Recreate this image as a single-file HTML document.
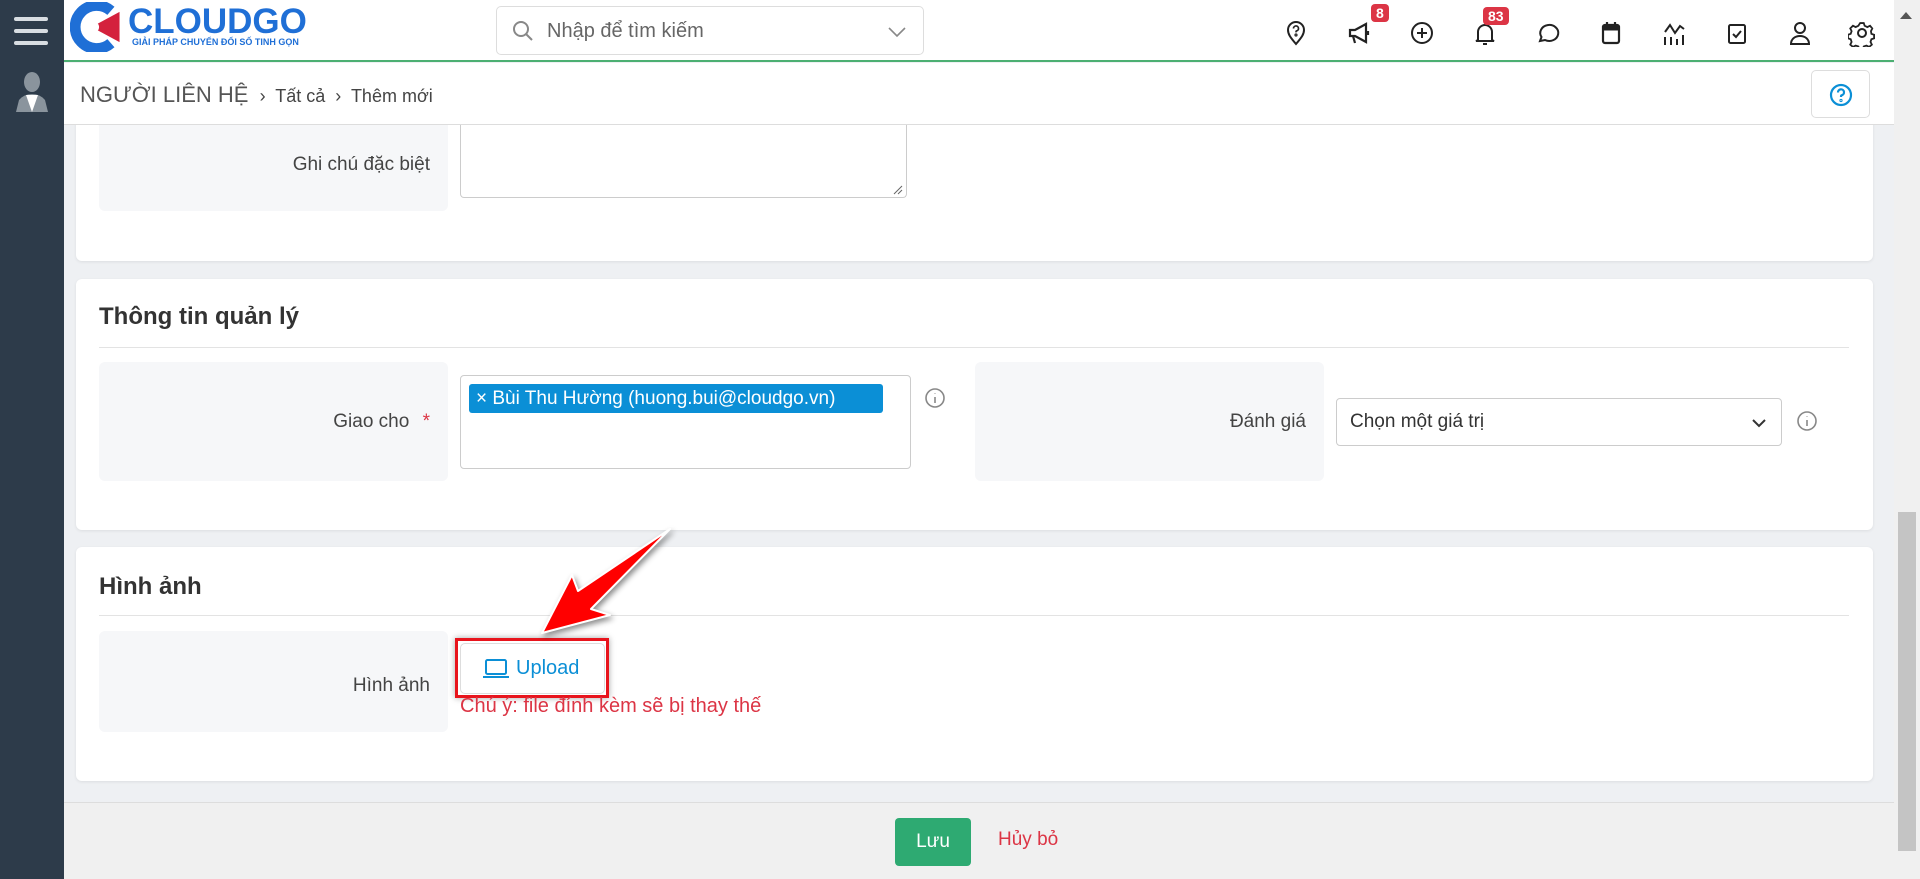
<!DOCTYPE html>
<html><head><meta charset="utf-8"><style>
*{box-sizing:border-box;margin:0;padding:0}
body{width:1920px;height:879px;overflow:hidden;background:#eef0f3;font-family:"Liberation Sans","Noto Sans CJK SC",sans-serif;color:#333;position:relative}
.abs{position:absolute}
.side{left:0;top:0;width:64px;height:879px;background:#2d3b4a}
.top{left:64px;top:0;width:1830px;height:62px;background:#fff;border-bottom:2px solid #4caf72}
.bc{left:64px;top:63px;width:1830px;height:62px;background:#fff;border-bottom:1px solid #ddd}
.card{background:#fff;border-radius:6px;box-shadow:0 1px 3px rgba(0,0,0,.08)}
.lbl{background:#f6f7f9;border-radius:6px;font-size:19px;color:#444;text-align:right;padding-right:18px}
.title{font-size:24px;font-weight:bold;color:#333}
.hr{height:1px;background:#e3e3e3}
.ico svg{width:28px;height:28px}
.badge{background:#dc3545;color:#fff;font-size:14px;font-weight:bold;border-radius:4px;padding:1px 5px}
</style></head><body>
<div class="abs side">
 <div class="abs" style="left:14px;top:17px;width:34px;height:4px;background:#d8dde2;border-radius:2px"></div>
 <div class="abs" style="left:14px;top:29px;width:34px;height:4px;background:#d8dde2;border-radius:2px"></div>
 <div class="abs" style="left:14px;top:41px;width:34px;height:4px;background:#d8dde2;border-radius:2px"></div>
 <svg class="abs" style="left:14px;top:72px" width="36" height="40" viewBox="0 0 36 40"><ellipse cx="18" cy="10" rx="8" ry="10" fill="#8a949d"/><path d="M2 40 L5 28 Q10 22 18 22 Q26 22 31 28 L34 40Z" fill="#8a949d"/><path d="M12 23 L18 40 L24 23Z" fill="#fff"/></svg>
</div>
<div class="abs top">
 <svg class="abs" style="left:6px;top:2px" width="56" height="50" viewBox="0 0 52 46"><path d="M38 8 A20 20 0 1 0 38 38" fill="none" stroke="#1f6fd6" stroke-width="10"/><path d="M20 23 L46 9 L46 37Z" fill="#d4213d"/><circle cx="22" cy="23" r="5" fill="#fff"/></svg>
 <div class="abs" style="left:64px;top:2px;font-size:35px;font-weight:bold;color:#1f6fd6;letter-spacing:0px">CLOUDGO</div>
 <div class="abs" style="left:68px;top:37px;font-size:9px;font-weight:bold;color:#1f6fd6">GIẢI PHÁP CHUYỂN ĐỔI SỐ TINH GỌN</div>
 <div class="abs" style="left:432px;top:6px;width:428px;height:49px;border:1px solid #ddd;border-radius:5px">
  <svg class="abs" style="left:14px;top:12px" width="24" height="24" viewBox="0 0 24 24" fill="none" stroke="#888" stroke-width="2"><circle cx="10" cy="10" r="7"/><path d="M15 15l6 6"/></svg>
  <div class="abs" style="left:50px;top:13px;font-size:20px;color:#666">Nhập để tìm kiếm</div>
  <svg class="abs" style="left:390px;top:18px" width="20" height="14" viewBox="0 0 20 14" fill="none" stroke="#888" stroke-width="1.6"><path d="M2 3l8 8 8-8"/></svg>
 </div>
</div>
<div class="abs ico" style="left:1282px;top:19px"><svg viewBox="0 0 28 28" fill="none" stroke="#222" stroke-width="2"><path d="M14 25 C8 18 6 15 6 11 A8 8 0 0 1 22 11 C22 15 20 18 14 25Z"/><path d="M11.5 9.5a2.5 2.5 0 1 1 3 2.4c-.5.2-.5.8-.5 1.5" stroke-width="1.7"/><circle cx="14" cy="16" r=".6"/></svg></div>
<div class="abs ico" style="left:1345px;top:19px"><svg viewBox="0 0 28 28" fill="none" stroke="#222" stroke-width="2.2"><path d="M5 11h5l11-6v18l-11-6H5z"/><path d="M8 17l2 7"/><path d="M23 12v4"/></svg></div>
<div class="abs badge" style="left:1371px;top:4px">8</div>
<div class="abs ico" style="left:1408px;top:19px"><svg viewBox="0 0 28 28" fill="none" stroke="#222" stroke-width="2"><circle cx="14" cy="14" r="10"/><path d="M14 9v10M9 14h10"/></svg></div>
<div class="abs ico" style="left:1471px;top:19px"><svg viewBox="0 0 28 28" fill="none" stroke="#222" stroke-width="2"><path d="M7 21V13a7 7 0 0 1 14 0v8l2 1H5z"/><path d="M12 25h4"/></svg></div>
<div class="abs badge" style="left:1483px;top:7px">83</div>
<div class="abs ico" style="left:1534px;top:19px"><svg viewBox="0 0 28 28" fill="none" stroke="#222" stroke-width="2"><path d="M6 22l1.5-4A9 8 0 1 1 11 21z"/></svg></div>
<div class="abs ico" style="left:1597px;top:19px"><svg viewBox="0 0 28 28" fill="none" stroke="#222" stroke-width="2.2"><rect x="6" y="6" width="16" height="18" rx="2"/><path d="M6 9h16" stroke-width="5"/><path d="M10 3v4M18 3v4"/></svg></div>
<div class="abs ico" style="left:1660px;top:19px"><svg viewBox="0 0 28 28" fill="none" stroke="#222" stroke-width="2"><path d="M5 26v-8M11 26v-8M17 26v-6M23 26v-10"/><path d="M5 13l5-7 5 8 5-7 4 3"/></svg></div>
<div class="abs ico" style="left:1723px;top:19px"><svg viewBox="0 0 28 28" fill="none" stroke="#222" stroke-width="2"><rect x="6" y="6" width="16" height="18" rx="1.5"/><path d="M10 15l3 3 5-6"/></svg></div>
<div class="abs ico" style="left:1786px;top:19px"><svg viewBox="0 0 28 28" fill="none" stroke="#222" stroke-width="2"><circle cx="14" cy="9" r="5"/><path d="M5 25c0-5 4-8 9-8s9 3 9 8z"/></svg></div>
<div class="abs ico" style="left:1848px;top:19px"><svg viewBox="0 0 28 28" fill="none" stroke="#222" stroke-width="2"><circle cx="14" cy="14" r="4"/><path d="M12 3h4l1 3 3 1.5 3-1.5 2.5 3-1.5 3 .5 3 3 1v4l-3 1-1 3 1.5 3-3 2.5-3-1.5-3 1-1 3h-4l-1-3-3-1-3 1.5-3-2.5 1.5-3-1-3-3-1v-4l3-1 1-3-1.5-3 3-3 3 1.5 3-1.5z" transform="scale(.9) translate(1.5 1.5)"/></svg></div>
<div class="abs" style="left:1894px;top:0;width:26px;height:879px;background:#f0f0f0"></div>
<div class="abs" style="left:1898px;top:512px;width:18px;height:339px;background:#c4c4c4"></div>
<div class="abs" style="left:1900px;top:12px;width:0;height:0;border-left:6px solid transparent;border-right:6px solid transparent;border-bottom:7px solid #555"></div>
<!-- card1 -->
<div class="abs card" style="left:76px;top:120px;width:1797px;height:141px;border-radius:0 0 6px 6px"></div>
<div class="abs lbl" style="left:99px;top:120px;width:349px;height:91px;line-height:90px;border-radius:0 0 6px 6px">Ghi chú đặc biệt</div>
<div class="abs" style="left:460px;top:120px;width:447px;height:78px;border:1px solid #ccc;border-top:none;border-radius:0 0 4px 4px"></div>
<svg class="abs" style="left:893px;top:185px" width="10" height="10" viewBox="0 0 10 10" stroke="#666" stroke-width="1"><path d="M1 9L9 1M5 9L9 5"/></svg>
<!-- breadcrumb -->
<div class="abs bc">
 <div class="abs" style="left:16px;top:19px;font-size:22px;color:#555">NGƯỜI LIÊN HỆ <span style="font-size:18px;color:#444">&nbsp;›&nbsp; Tất cả &nbsp;›&nbsp; Thêm mới</span></div>
 <div class="abs" style="left:1747px;top:7px;width:59px;height:48px;border:1px solid #ddd;border-radius:5px"><svg class="abs" style="left:17px;top:12px" width="24" height="24" viewBox="0 0 24 24" fill="none" stroke="#0b8fd6" stroke-width="2.2"><circle cx="12" cy="12" r="10"/><path d="M9 9.5a3 3 0 1 1 3.5 2.8c-.5.2-.5.8-.5 1.7"/><circle cx="12" cy="17.5" r=".5"/></svg></div>
</div>
<!-- card2 -->
<div class="abs card" style="left:76px;top:279px;width:1797px;height:251px"></div>
<div class="abs title" style="left:99px;top:303px">Thông tin quản lý</div>
<div class="abs hr" style="left:99px;top:347px;width:1750px"></div>
<div class="abs lbl" style="left:99px;top:362px;width:349px;height:119px;line-height:119px">Giao cho <span style="color:#dc3545;margin-left:8px">*</span></div>
<div class="abs" style="left:460px;top:375px;width:451px;height:94px;border:1px solid #ccc;border-radius:4px"></div>
<div class="abs" style="left:469px;top:384px;width:414px;height:29px;background:#0b8fd6;border-radius:3px;color:#fff;font-size:19px;line-height:29px;padding-left:7px">× Bùi Thu Hường (huong.bui@cloudgo.vn)</div>
<svg class="abs" style="left:924px;top:387px" width="22" height="22" viewBox="0 0 22 22" fill="none" stroke="#888" stroke-width="1.6"><circle cx="11" cy="11" r="9"/><path d="M11 10v6M11 6.5v.5"/></svg>
<div class="abs lbl" style="left:975px;top:362px;width:349px;height:119px;line-height:119px">Đánh giá</div>
<div class="abs" style="left:1336px;top:398px;width:446px;height:48px;border:1px solid #ccc;border-radius:4px;font-size:19px;line-height:46px;padding-left:13px;color:#333">Chọn một giá trị
 <svg class="abs" style="left:414px;top:18px" width="16" height="12" viewBox="0 0 16 12" fill="none" stroke="#333" stroke-width="2"><path d="M2 3l6 6 6-6"/></svg></div>
<svg class="abs" style="left:1796px;top:410px" width="22" height="22" viewBox="0 0 22 22" fill="none" stroke="#888" stroke-width="1.6"><circle cx="11" cy="11" r="9"/><path d="M11 10v6M11 6.5v.5"/></svg>
<!-- card3 -->
<div class="abs card" style="left:76px;top:547px;width:1797px;height:234px"></div>
<div class="abs title" style="left:99px;top:573px">Hình ảnh</div>
<div class="abs hr" style="left:99px;top:615px;width:1750px"></div>
<div class="abs lbl" style="left:99px;top:631px;width:349px;height:101px;line-height:110px">Hình ảnh</div>
<div class="abs" style="left:460px;top:643px;width:145px;height:51px;border:1px solid #ddd;border-radius:5px;color:#0b8fd6;font-size:20px;line-height:49px;padding-left:55px">Upload
 <svg class="abs" style="left:21px;top:14px" width="28" height="22" viewBox="0 0 28 22" fill="none" stroke="#0b8fd6" stroke-width="2"><rect x="4" y="2" width="20" height="14" rx="1.5"/><path d="M1 19h26"/></svg></div>
<div class="abs" style="left:455px;top:638px;width:154px;height:60px;border:3px solid #e8141c;box-shadow:0 0 6px rgba(0,0,0,.35)"></div>
<div class="abs" style="left:460px;top:695px;font-size:20px;color:#dc3545">Chú ý: file đính kèm sẽ bị thay thế</div>
<svg class="abs" style="left:520px;top:520px;filter:drop-shadow(2px 3px 3px rgba(0,0,0,.45))" width="170" height="130" viewBox="0 0 170 130"><polygon points="22,113 52,55 58,71 150,9 71,89 90,95" fill="#f00" stroke="#fff" stroke-width="2" stroke-linejoin="round"/></svg>
<!-- footer -->
<div class="abs" style="left:64px;top:802px;width:1830px;height:77px;background:#f0f0f0;border-top:1px solid #ddd"></div>
<div class="abs" style="left:895px;top:818px;width:76px;height:48px;background:#2eaa72;border-radius:4px;color:#fff;font-size:19px;line-height:48px;text-align:center">Lưu</div>
<div class="abs" style="left:998px;top:829px;font-size:19px;color:#dc3545">Hủy bỏ</div>
</body></html>
